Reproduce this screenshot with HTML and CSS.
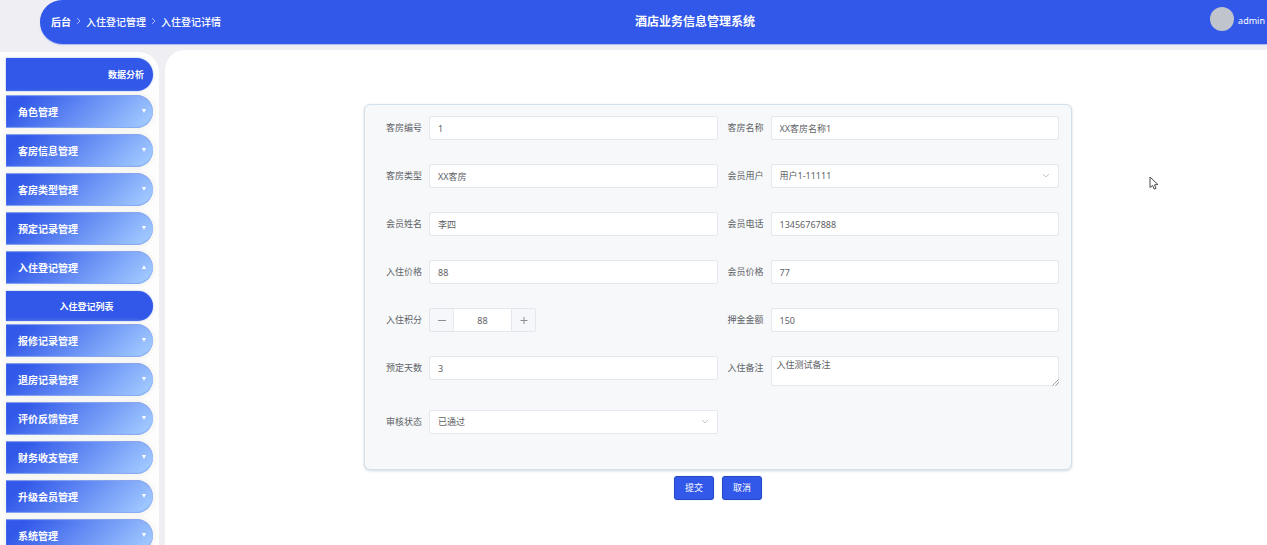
FILE: index.html
```html
<!DOCTYPE html>
<html lang="zh-CN">
<head>
<meta charset="utf-8">
<meta name="viewport" content="width=device-width, initial-scale=1">
<title>酒店业务信息管理系统</title>
<link rel="stylesheet" href="styles.css">
</head>
<body>
<div class="app">
  <header class="header">
    <nav class="crumbs" aria-label="面包屑">
      <a class="crumb crumb-home" href="#">后台</a>
      <svg class="crumb-sep" viewBox="0 0 5 8"><path d="M1 1l3 3-3 3"/></svg>
      <a class="crumb" href="#">入住登记管理</a>
      <svg class="crumb-sep" viewBox="0 0 5 8"><path d="M1 1l3 3-3 3"/></svg>
      <a class="crumb" href="#">入住登记详情</a>
    </nav>
    <h1 class="title">酒店业务信息管理系统</h1>
    <div class="user"><span class="avatar"></span><span class="user-name">admin</span></div>
  </header>
  <div class="body">
    <aside class="sidebar">
      <a class="sub sub-top" href="#">数据分析</a>
      <button class="menu" type="button">角色管理<span class="arrow"></span></button>
      <button class="menu" type="button">客房信息管理<span class="arrow"></span></button>
      <button class="menu" type="button">客房类型管理<span class="arrow"></span></button>
      <button class="menu" type="button">预定记录管理<span class="arrow"></span></button>
      <button class="menu menu-open" type="button" aria-expanded="true">入住登记管理<span class="arrow arrow-up"></span></button>
      <a class="sub" href="#">入住登记列表</a>
      <button class="menu" type="button">报修记录管理<span class="arrow"></span></button>
      <button class="menu" type="button">退房记录管理<span class="arrow"></span></button>
      <button class="menu" type="button">评价反馈管理<span class="arrow"></span></button>
      <button class="menu" type="button">财务收支管理<span class="arrow"></span></button>
      <button class="menu" type="button">升级会员管理<span class="arrow"></span></button>
      <button class="menu" type="button">系统管理<span class="arrow"></span></button>
    </aside>
    <main class="main">
      <form class="form">
        <div class="card">
          <div class="field"><label class="label" for="room-no">客房编号</label><input class="input" id="room-no" type="text" value="1"></div>
          <div class="field"><label class="label" for="room-name">客房名称</label><input class="input" id="room-name" type="text" value="XX客房名称1"></div>
          <div class="field"><label class="label" for="room-type">客房类型</label><input class="input" id="room-type" type="text" value="XX客房"></div>
          <div class="field"><label class="label" for="member">会员用户</label>
            <div class="select-box"><select class="input select" id="member"><option>用户1-11111</option></select><svg class="chevron" viewBox="0 0 8 6"><path d="M1 1l3 3 3-3"/></svg></div></div>
          <div class="field"><label class="label" for="member-name">会员姓名</label><input class="input" id="member-name" type="text" value="李四"></div>
          <div class="field"><label class="label" for="phone">会员电话</label><input class="input" id="phone" type="text" value="13456767888"></div>
          <div class="field"><label class="label" for="price">入住价格</label><input class="input" id="price" type="text" value="88"></div>
          <div class="field"><label class="label" for="member-price">会员价格</label><input class="input" id="member-price" type="text" value="77"></div>
          <div class="field"><label class="label" for="points">入住积分</label>
            <div class="stepper">
              <button class="step" type="button" aria-label="减少"><svg class="step-icon" viewBox="0 0 8 8"><path d="M0 4.5h8"/></svg></button>
              <input class="step-input" id="points" type="text" value="88">
              <button class="step" type="button" aria-label="增加"><svg class="step-icon" viewBox="0 0 8 8"><path d="M0.5 4.5h7M4 1v7"/></svg></button>
            </div></div>
          <div class="field"><label class="label" for="deposit">押金金额</label><input class="input" id="deposit" type="text" value="150"></div>
          <div class="field"><label class="label" for="days">预定天数</label><input class="input" id="days" type="text" value="3"></div>
          <div class="field"><label class="label" for="note">入住备注</label>
            <div class="note-box"><textarea class="input textarea" id="note">入住测试备注</textarea><svg class="grip" viewBox="0 0 7 7"><path d="M0.5 6.5l6-6M3.5 6.5l3-3"/></svg></div></div>
          <div class="field"><label class="label" for="status">审核状态</label>
            <div class="select-box"><select class="input select" id="status"><option>已通过</option></select><svg class="chevron" viewBox="0 0 8 6"><path d="M1 1l3 3 3-3"/></svg></div></div>
        </div>
        <div class="actions">
          <button class="action" type="submit">提交</button>
          <button class="action" type="button">取消</button>
        </div>
      </form>
    </main>
  </div>
  <svg class="cursor" viewBox="0 0 10 14"><path d="M1 1v10.5l2.6-2 1.6 3.6 1.8-.8-1.5-3.4 3.4-.4z"/></svg>
</div>
</body>
</html>
```

FILE: styles.css
```css
* { box-sizing: border-box; }

body {
  margin: 0;
  background: #eeeef3;
  font-family: "Noto Sans", "Noto Sans CJK SC", sans-serif;
  font-size: 9px;
  color: #606266;
}

a { color: inherit; text-decoration: none; }
button, input, select, textarea { font: inherit; color: inherit; margin: 0; }

.app {
  position: relative;
  display: flex;
  flex-direction: column;
  height: 100vh;
  overflow: hidden;
}

.header {
  display: grid;
  grid-template-columns: 1fr auto 1fr;
  align-items: center;
  flex: none;
  height: 44px;
  margin-left: 40px;
  padding: 0 2px 2px 11px;
  border-radius: 24px 0 0 24px;
  background: #3158e9;
  box-shadow: 0 1px 1px #a9b8f2;
  color: #fff;
}

.crumbs { display: flex; align-items: center; gap: 5px; font-size: 10px; }
.crumb { font-weight: 500; }
.crumb-home { font-weight: 700; }
.crumb-sep { width: 5px; height: 8px; fill: none; stroke: #a9b8ec; }
.title { margin: 0 0 0 74px; font-size: 12px; font-weight: 700; }
.user { display: flex; align-items: center; justify-content: flex-end; gap: 4px; }
.user-name { line-height: 12px; }
.avatar { width: 24px; height: 24px; margin-bottom: 4px; border-radius: 50%; background: #c0c4cc; }

.body {
  display: flex;
  flex: 1;
  gap: 6px;
  min-height: 0;
  padding-top: 6px;
}

.sidebar {
  flex: none;
  display: flex;
  flex-direction: column;
  gap: 6px;
  width: 159px;
  margin-top: 2px;
  padding: 6px 6px 0;
  overflow-y: auto;
  scrollbar-width: none;
  border-radius: 0 20px 0 0;
  background: #fdfdfd;
}

.menu, .sub {
  display: flex;
  flex: none;
  align-items: center;
  border: 0;
  border-radius: 0 17px 17px 0;
  color: #fff;
  font-weight: 700;
}

.menu {
  justify-content: space-between;
  height: 33px;
  padding: 0 7px 1px 12px;
  background: linear-gradient(135deg, #3158e9 12%, #9ec6ff 92%);
  box-shadow: 0 0 6px #ecebe4, inset 0 1px 1px #8ba5ed, inset 0 -1px 1px #85a8f1;
  font-size: 10px;
}

.menu-open { margin-bottom: 1px; }

.sub {
  justify-content: center;
  height: 30px;
  margin-bottom: -3px;
  padding-left: 14px;
  background: #3158e9;
  box-shadow: 0 0 2px #8ba5ed;
  font-size: 9px;
}

.sub-top { justify-content: flex-end; height: 33px; margin-bottom: -2px; padding-right: 9px; }

.arrow {
  border: 2px solid transparent;
  border-top: 4px solid #fff;
  border-bottom: 0;
}

.arrow-up { border-top: 0; border-bottom: 4px solid #fff; }

.main {
  flex: 1;
  min-width: 0;
  padding: 54px 195px 0 199px;
  border-radius: 20px 0 0 0;
  background: #fff;
}

.card {
  display: grid;
  grid-template-columns: 1fr 1fr;
  row-gap: 24px;
  padding: 11px 12px 35px 11px;
  border: 1px solid #d3dfeb;
  border-radius: 6px;
  background: #f6f8fa;
  box-shadow: 0 1px 3px #d4d8dd;
}

.field { display: flex; align-items: flex-start; min-width: 0; }
.label { flex: none; width: 53px; padding-right: 7px; line-height: 24px; text-align: right; white-space: nowrap; }

.input {
  display: block;
  flex: 1;
  width: 100%;
  min-width: 0;
  height: 24px;
  padding: 0 8px;
  border: 1px solid #e4e7ed;
  border-radius: 2px;
  background: #fff;
  outline: 0;
}

.select-box, .note-box { position: relative; flex: 1; }
.select { appearance: none; padding: 0 8px 2px; }

.chevron {
  position: absolute;
  top: 9px;
  right: 9px;
  width: 8px;
  height: 6px;
  fill: none;
  stroke: #c0c4cc;
  pointer-events: none;
}

.textarea { height: 30px; padding: 1px 5px; line-height: 14px; resize: none; }

.grip {
  position: absolute;
  right: 0;
  bottom: 0;
  width: 7px;
  height: 7px;
  fill: none;
  stroke: #a0a0a0;
  pointer-events: none;
}

.stepper {
  display: flex;
  width: 107px;
  height: 24px;
  border: 1px solid #e4e7ed;
  border-radius: 2px;
  overflow: hidden;
}

.step {
  display: flex;
  flex: none;
  align-items: center;
  justify-content: center;
  width: 23px;
  padding: 0;
  border: 0;
  background: #f5f7fa;
}

.step-icon { width: 8px; height: 8px; fill: none; stroke: #8b8e94; }

.step-input {
  flex: 1;
  min-width: 0;
  padding: 0;
  border: solid #e4e7ed;
  border-width: 0 1px;
  background: #fff;
  text-align: center;
  outline: 0;
}

.actions { display: flex; justify-content: center; gap: 8px; padding-top: 6px; }

.action {
  width: 40px;
  height: 24px;
  padding: 0 0 1px;
  border: 1px solid #2748c4;
  border-radius: 3px;
  background: #3158e9;
  box-shadow: 0 0 1px #8da8f2;
  color: #fff;
}

.cursor {
  position: absolute;
  top: 176px;
  left: 1149px;
  width: 10px;
  height: 14px;
  fill: #fff;
  stroke: #4a4a4a;
}
```
